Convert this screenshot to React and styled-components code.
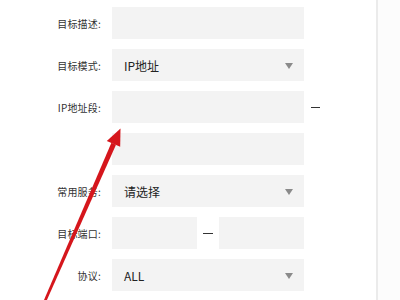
import React from "react";
import styled, { createGlobalStyle } from "styled-components";

const GlobalStyle = createGlobalStyle`
  html, body {
    margin: 0;
    padding: 0;
    background: #ffffff;
  }
  body {
    font-family: "Noto Sans CJK SC", "Liberation Sans", sans-serif;
  }
`;

const Page = styled.div`
  position: relative;
  display: flex;
  width: 400px;
  height: 300px;
  overflow: hidden;
`;

const Form = styled.div`
  width: 376px;
  padding-top: 7px;
  display: flex;
  flex-direction: column;
  gap: 10px;
`;

const Divider = styled.div`
  width: 2px;
  background: #ebebeb;
`;

const Side = styled.div`
  flex: 1;
  background: #fcfcfc;
`;

const Row = styled.div`
  display: flex;
  align-items: center;
  height: 32px;
`;

const Label = styled.div`
  width: 101px;
  margin-right: 11px;
  text-align: right;
  font-size: 10px;
  color: #333333;
  letter-spacing: 0.2px;
  white-space: nowrap;
`;

const Field = styled.div`
  position: relative;
  box-sizing: border-box;
  width: ${(p) => p.$w || 192}px;
  height: 100%;
  background: #f3f3f3;
  display: flex;
  align-items: center;
  padding-left: 12px;
  font-size: 12px;
  color: #222222;
`;

const Caret = styled.span`
  position: absolute;
  right: 11px;
  top: 14px;
  width: 0;
  height: 0;
  border-left: 4.5px solid transparent;
  border-right: 4.5px solid transparent;
  border-top: 6px solid #8a8a8a;
`;

const Dash = styled.span`
  width: ${(p) => p.$w || 9}px;
  height: 1px;
  background: #333333;
  margin: 0 ${(p) => p.$m || 0}px 0 ${(p) => p.$l || 7}px;
`;

const Overlay = styled.svg`
  position: absolute;
  left: 0;
  top: 0;
  pointer-events: none;
`;

function Arrow() {
  return (
    <Overlay width="400" height="300" viewBox="0 0 400 300">
      <polygon
        points="39.5,310.5 41.8,311.5 116,144.7 111.4,142.7"
        fill="#d5161c"
      />
      <polygon points="120.5,128.5 106.8,141 120.2,146.8" fill="#d5161c" />
    </Overlay>
  );
}

export default function App() {
  return (
    <>
      <GlobalStyle />
      <Page>
        <Form>
          <Row>
            <Label>目标描述:</Label>
            <Field />
          </Row>
          <Row>
            <Label>目标模式:</Label>
            <Field>
              IP地址
              <Caret />
            </Field>
          </Row>
          <Row>
            <Label>IP地址段:</Label>
            <Field />
            <Dash />
          </Row>
          <Row>
            <Label />
            <Field />
          </Row>
          <Row>
            <Label>常用服务:</Label>
            <Field>
              请选择
              <Caret />
            </Field>
          </Row>
          <Row>
            <Label>目标端口:</Label>
            <Field $w={85} />
            <Dash $w={10} $l={6} $m={6} />
            <Field $w={85} />
          </Row>
          <Row>
            <Label>协议:</Label>
            <Field>
              ALL
              <Caret />
            </Field>
          </Row>
        </Form>
        <Divider />
        <Side />
        <Arrow />
      </Page>
    </>
  );
}
